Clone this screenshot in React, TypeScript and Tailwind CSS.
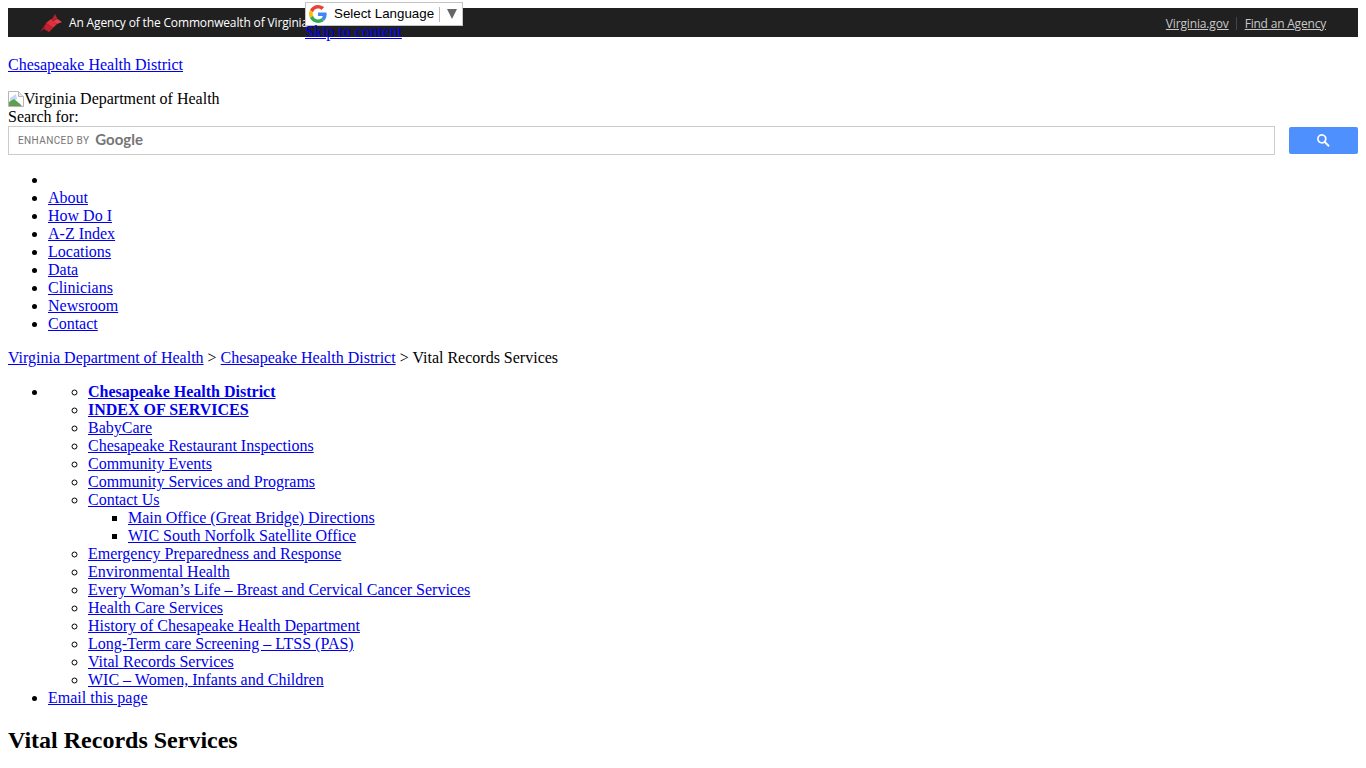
const linkClass = 'text-[#0000ee] underline'

const topNav = ['About', 'How Do I', 'A-Z Index', 'Locations', 'Data', 'Clinicians', 'Newsroom', 'Contact']

const afterContact = [
  'Emergency Preparedness and Response',
  'Environmental Health',
  'Every Woman’s Life – Breast and Cervical Cancer Services',
  'Health Care Services',
  'History of Chesapeake Health Department',
  'Long-Term care Screening – LTSS (PAS)',
  'Vital Records Services',
  'WIC – Women, Infants and Children',
]

const beforeContact = [
  'BabyCare',
  'Chesapeake Restaurant Inspections',
  'Community Events',
  'Community Services and Programs',
]

function Cardinal() {
  return (
    <svg width="22" height="18" viewBox="0 0 22 18" className="block">
      <polygon points="15,0 17.500,5 11,7" fill="#b8232f" />
      <polygon points="17.500,5 22,8 17,10 13,7" fill="#e8404a" />
      <polygon points="11,5 17,10 13,14 6,9" fill="#e0303c" />
      <polygon points="6,9 13,14 9,18 4,15" fill="#c4202e" />
      <polygon points="6,9 4,15 0,18" fill="#a81c28" />
    </svg>
  )
}

function GoogleG() {
  return (
    <svg width="18" height="18" viewBox="0 0 48 48" className="block">
      <path fill="#EA4335" d="M24 9.500c3.500 0 6.700 1.200 9.200 3.600l6.900-6.900C35.900 2.400 30.500 0 24 0 14.600 0 6.500 5.400 2.600 13.200l8 6.200C12.500 13.700 17.800 9.500 24 9.500z" />
      <path fill="#4285F4" d="M47 24.500c0-1.600-.1-3.100-.4-4.500H24v9h12.900c-.6 3-2.200 5.500-4.700 7.200l7.700 6c4.500-4.200 7.100-10.300 7.100-17.700z" />
      <path fill="#FBBC05" d="M10.600 28.600c-.5-1.400-.8-3-.8-4.600s.3-3.200.8-4.600l-8-6.200C.9 16.500 0 20.100 0 24s.9 7.500 2.600 10.800l8-6.200z" />
      <path fill="#34A853" d="M24 48c6.500 0 11.900-2.100 15.900-5.800l-7.700-6c-2.200 1.500-4.900 2.300-8.200 2.300-6.200 0-11.500-4.200-13.400-9.900l-8 6.200C6.500 42.600 14.600 48 24 48z" />
    </svg>
  )
}

function BrokenImage() {
  return (
    <svg width="16" height="16" viewBox="0 0 16 16" className="block shrink-0">
      <path d="M0.500 0.500H10.500L15.500 5.500V15.500H0.500Z" fill="#fff" stroke="#b5b5b5" />
      <path d="M10.500 0.500V5.500H15.500" fill="#e8e8e8" stroke="#b5b5b5" />
      <path d="M2 7L8 3L9 8L2 11Z" fill="#c5d8f5" />
      <path d="M1 15V11L6 8L11 12L14 15Z" fill="#5fa04e" />
    </svg>
  )
}

export default function App() {
  return (
    <div className="relative h-[768px] overflow-hidden bg-white p-2 font-['Liberation_Serif',serif] text-base leading-[18px] text-black">
      <div className="flex h-[29px] items-center justify-between bg-[#202020] pl-[32px] pr-[32px] font-['Open_Sans',sans-serif] text-[12px]">
        <div className="flex items-center gap-[7px] tracking-[-0.15px] text-white">
          <Cardinal />
          <span>An Agency of the Commonwealth of Virginia</span>
        </div>
        <div className="mt-[2px] flex items-center text-[#c8c8c8]">
          <a className="tracking-[-0.15px] underline">Virginia.gov</a>
          <span className="ml-[7px] mr-[8px] h-[13px] w-px bg-[#444444]" />
          <a className="tracking-[-0.2px] underline">Find an Agency</a>
        </div>
      </div>

      <div className="absolute left-[305px] top-[2px] flex h-[24px] w-[158px] items-center border border-[#c4c4c4] bg-white pl-[3px] font-['Liberation_Sans',sans-serif] text-[13.33px]">
        <GoogleG />
        <span className="ml-[7px]">Select Language</span>
        <span className="ml-[5px] h-[15px] w-px bg-[#bbbbbb]" />
        <span className="ml-[7px] h-0 w-0 border-x-[5px] border-t-[10px] border-x-transparent border-t-[#666666]" />
      </div>
      <a className={`absolute left-[305px] top-[23px] z-10 ${linkClass}`}>Skip to content</a>

      <p className="mt-[19px] mb-4">
        <a className={linkClass}>Chesapeake Health District</a>
      </p>

      <div className="flex h-[18px] items-center">
        <BrokenImage />
        <span>Virginia Department of Health</span>
      </div>
      <div>Search for:</div>

      <div className="flex items-center">
        <div className="flex h-[29px] flex-1 items-center border border-[#cccccc] pl-[9px] text-[#757575]">
          <span className="font-['Roboto',sans-serif] text-[10px] tracking-[0.4px]">ENHANCED BY</span>
          <span className="mb-[3px] ml-[6px] font-['Lato',sans-serif] text-[15px] font-bold">Google</span>
        </div>
        <div className="ml-[14px] flex h-[27px] w-[69px] items-center justify-center rounded-[2px] bg-[#4d90fe]">
          <svg width="13" height="13" viewBox="0 0 13 13">
            <path
              fill="#fff"
              d="m4.800 0a4.800 4.800 0 0 1 3.900 7.600l4 4-1.300 1.300-4-4a4.800 4.800 0 1 1-2.600-8.900zm0 1.700a3.100 3.100 0 1 0 0 6.200 3.100 3.100 0 0 0 0-6.200z"
            />
          </svg>
        </div>
      </div>

      <ul className="my-4 list-disc pl-10">
        <li className="h-[18px]" />
        {topNav.map((item) => (
          <li key={item}>
            <a className={linkClass}>{item}</a>
          </li>
        ))}
      </ul>

      <div>
        <a className={linkClass}>Virginia Department of Health</a> &gt;{' '}
        <a className={linkClass}>Chesapeake Health District</a> &gt; Vital Records Services
      </div>

      <ul className="my-4 list-disc pl-10">
        <li>
          <ul className="list-[circle] pl-10">
            <li>
              <a className={`${linkClass} font-bold`}>Chesapeake Health District</a>
            </li>
            <li>
              <a className={`${linkClass} font-bold`}>INDEX OF SERVICES</a>
            </li>
            {beforeContact.map((item) => (
              <li key={item}>
                <a className={linkClass}>{item}</a>
              </li>
            ))}
            <li>
              <a className={linkClass}>Contact Us</a>
              <ul className="list-[square] pl-10">
                <li>
                  <a className={linkClass}>Main Office (Great Bridge) Directions</a>
                </li>
                <li>
                  <a className={linkClass}>WIC South Norfolk Satellite Office</a>
                </li>
              </ul>
            </li>
            {afterContact.map((item) => (
              <li key={item}>
                <a className={linkClass}>{item}</a>
              </li>
            ))}
          </ul>
        </li>
        <li>
          <a className={linkClass}>Email this page</a>
        </li>
      </ul>

      <h1 className="mt-[20px] text-2xl leading-[27px] font-bold">Vital Records Services</h1>
    </div>
  )
}
